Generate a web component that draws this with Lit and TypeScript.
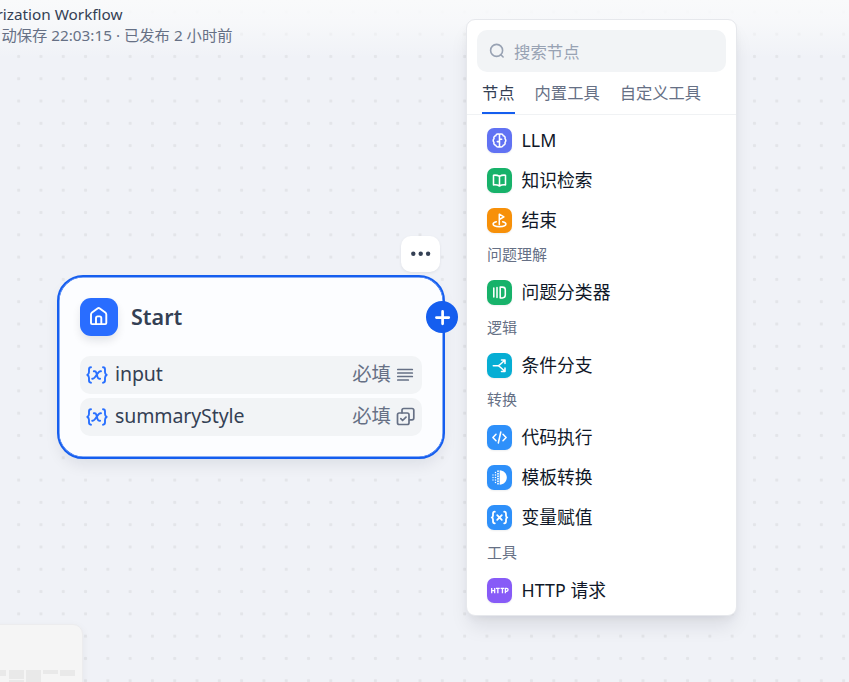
import { LitElement, html, css, svg } from 'lit';
import { customElement, property, state } from 'lit/decorators.js';
import { classMap } from 'lit/directives/class-map.js';

const glyphs: Record<string, unknown> = {
  llm: svg`<path d="M12.500 6v13M11.600 6.100c-1.400-.3-2.600.4-2.900 1.700-1.500.3-2.200 1.600-1.700 2.900-1.100 1-1.100 2.600 0 3.600-.5 1.400.2 2.600 1.700 2.900.3 1.300 1.500 2 2.900 1.700M13.400 6.100c1.400-.3 2.600.4 2.900 1.700 1.500.3 2.200 1.600 1.700 2.900 1.100 1 1.100 2.600 0 3.600.5 1.400-.2 2.600-1.700 2.900-.3 1.300-1.500 2-2.900 1.700M10.300 13.600h2.200M12.500 11.200h2.200"/>`,
  book: svg`<path d="M12.500 8.300v9.700M12.500 8.300c-1.600-1-3.800-1.300-6-1.100v9.700c2.200-.2 4.400.1 6 1.100 1.600-1 3.800-1.300 6-1.100V7.200c-2.200-.2-4.400.1-6 1.100z"/>`,
  end: svg`<path d="M12.300 16.500V6.200l4.600 2.700-4.600 2.600"/><path d="M9.300 13.800c-1.900.4-3.200 1.200-3.200 2.200 0 1.500 2.800 2.600 6.400 2.600s6.400-1.100 6.400-2.600c0-1-1.300-1.800-3.200-2.200"/>`,
  classify: svg`<path d="M6.800 8v9M10 7.600v9.800M13.200 7.100h2.200c1.800 0 2.900 1.100 2.900 2.700v5.300c0 1.700-1.100 2.800-2.900 2.800h-2.200z"/>`,
  branch: svg`<path d="M6.300 12.700h4.500c1 0 1.600-.4 2.300-1.200l4.700-4.300M10.800 12.700c1 0 1.600.5 2.300 1.300l4.700 4.300M14.500 6.900h3.500v3.500M14.500 18.500h3.500V15"/>`,
  code: svg`<path d="M9 9.300l-3.100 3.200 3.100 3.200M16 9.300l3.100 3.200-3.100 3.200M13.800 7l-2.500 11"/>`,
  template: svg`<path class="fill" d="M12.700 5.200c4 .2 7.100 3.400 7.100 7.300s-3.100 7.100-7.100 7.300z"/><g class="fill"><circle cx="11" cy="6.200" r=".9"/><circle cx="11" cy="8.700" r=".95"/><circle cx="11" cy="11.200" r=".95"/><circle cx="11" cy="13.700" r=".95"/><circle cx="11" cy="16.200" r=".95"/><circle cx="11" cy="18.700" r=".9"/><circle cx="8.500" cy="7.600" r=".75"/><circle cx="8.500" cy="10" r=".8"/><circle cx="8.500" cy="12.500" r=".8"/><circle cx="8.500" cy="15" r=".8"/><circle cx="8.500" cy="17.400" r=".75"/><circle cx="6" cy="10" r=".65"/><circle cx="6" cy="12.500" r=".7"/><circle cx="6" cy="15" r=".65"/></g>`,
  assign: svg`<path class="heavy" d="M7.800 6.700c-1.500 0-1.800.7-1.800 2v1.700c0 1.200-.4 1.800-1.300 2.100.9.3 1.300.9 1.300 2.100v1.700c0 1.300.3 2 1.800 2M17.200 6.700c1.500 0 1.800.7 1.800 2v1.700c0 1.200.4 1.800 1.300 2.100-.9.3-1.300.9-1.300 2.100v1.700c0 1.300-.3 2-1.800 2M10.200 10.200l4.600 4.600M14.800 10.200l-4.600 4.600"/>`,
  http: svg`<path class="bold" d="M4.700 10v5.200M7.700 10v5.200M4.700 12.600h3M9 10.400h3.700M10.850 10.400v4.800M13.600 10.400h3.700M15.450 10.400v4.800M18.400 15.200v-4.800h1.200a1.450 1.450 0 0 1 0 2.900h-1.200"/>`,
};

interface Block { icon: string; label: string; tone: string }
interface Section { title?: string; blocks: Block[] }

const sections: Section[] = [
  { blocks: [
    { icon: 'llm', label: 'LLM', tone: 'indigo' },
    { icon: 'book', label: '知识检索', tone: 'green' },
    { icon: 'end', label: '结束', tone: 'orange' },
  ] },
  { title: '问题理解', blocks: [{ icon: 'classify', label: '问题分类器', tone: 'green' }] },
  { title: '逻辑', blocks: [{ icon: 'branch', label: '条件分支', tone: 'cyan' }] },
  { title: '转换', blocks: [
    { icon: 'code', label: '代码执行', tone: 'blue' },
    { icon: 'template', label: '模板转换', tone: 'blue' },
    { icon: 'assign', label: '变量赋值', tone: 'blue' },
  ] },
  { title: '工具', blocks: [{ icon: 'http', label: 'HTTP 请求', tone: 'violet' }] },
];

@customElement('block-icon')
class BlockIcon extends LitElement {
  @property() name = '';
  @property() tone = 'blue';
  static styles = css`
    :host { display: block; width: 25px; height: 25px; flex: none; }
    .tile { width: 25px; height: 25px; border-radius: 7px; box-shadow: 0 1px 2px rgba(16, 24, 40, .07); }
    .indigo { background: #6172f3; }
    .green { background: #17b26a; }
    .orange { background: #f79009; }
    .cyan { background: #06aed4; }
    .blue { background: #2e90fa; }
    .violet { background: #875bf7; }
    svg { display: block; fill: none; stroke: #fff; stroke-width: 1.55; stroke-linecap: round; stroke-linejoin: round; }
    .fill { fill: #fff; stroke: none; }
    .heavy { stroke-width: 1.8; }
    .bold { stroke-width: 1.3; stroke-linecap: butt; }
  `;
  render() {
    return html`<div class="tile ${this.tone}"><svg width="25" height="25" viewBox="0 0 25 25">${glyphs[this.name]}</svg></div>`;
  }
}

@customElement('node-picker')
class NodePicker extends LitElement {
  @state() private active = 0;
  static styles = css`
    :host { display: block; box-sizing: border-box; width: 271px; height: 597px; border: 1px solid #e6e8ec; border-radius: 9px; background: #fff; box-shadow: 0 13px 20px -4px rgba(16, 24, 40, .1), 0 4px 8px -2px rgba(16, 24, 40, .05); }
    .search { display: flex; align-items: center; gap: 9px; box-sizing: border-box; height: 42px; margin: 10px 10px 0; padding: 0 12px; border-radius: 10px; background: #f2f4f6; color: #98a2b3; font-size: 16.400px; }
    .search svg { fill: none; stroke: #98a2b3; stroke-width: 1.6; stroke-linecap: round; }
    .tabs { display: flex; gap: 20px; height: 42px; padding: 0 15px; border-bottom: 1px solid #f0f2f4; }
    .tab { box-sizing: border-box; height: 42px; line-height: 43px; font-size: 16.300px; color: #667085; border-bottom: 2px solid transparent; white-space: nowrap; }
    .tab.on { color: #344054; border-bottom-color: #155eef; }
    .list { padding-top: 5px; }
    .title { height: 32.500px; line-height: 28px; padding-left: 20px; font-size: 15px; color: #667085; }
    .row { display: flex; align-items: center; gap: 9.500px; height: 40px; padding-left: 20px; font-size: 17.800px; line-height: 24px; color: #101828; }
    .label { margin-top: -1px; }
    .latin { letter-spacing: .05px; }
  `;
  render() {
    return html`
      <div class="search"><svg width="16" height="16" viewBox="0 0 16 16"><circle cx="7.600" cy="7.400" r="6"/><path d="M12.100 12l2 2"/></svg><span>搜索节点</span></div>
      <div class="tabs">${['节点', '内置工具', '自定义工具'].map((t, i) => html`<div class=${classMap({ tab: true, on: i === this.active })} @click=${() => (this.active = i)}>${t}</div>`)}</div>
      <div class="list">${sections.map((s) => html`
        ${s.title ? html`<div class="title">${s.title}</div>` : ''}
        ${s.blocks.map((b) => html`<div class="row"><block-icon name=${b.icon} tone=${b.tone}></block-icon><span class=${classMap({ label: true, latin: /^[A-Z]/.test(b.label) })}>${b.label}</span></div>`)}`)}
      </div>`;
  }
}

@customElement('start-node')
class StartNode extends LitElement {
  static styles = css`
    :host { display: block; box-sizing: border-box; width: 388px; height: 184px; border: 2px solid #155eef; border-radius: 26px; background: #fcfdff; padding: 21px 21px; box-shadow: 0 8px 16px -3px rgba(16, 24, 40, .09), inset 0 0 0 .5px #155eef; }
    .head { display: flex; align-items: center; gap: 13px; height: 38px; margin-bottom: 20px; }
    .home { width: 38px; height: 38px; border-radius: 11px; background: #296dff; box-shadow: 0 5px 10px -1px rgba(16, 24, 40, .12); }
    .home svg { display: block; fill: none; stroke: #fff; stroke-width: 1.9; stroke-linejoin: round; stroke-linecap: round; }
    .name { margin-top: -2px; font-size: 21.500px; font-weight: 600; color: #344054; }
    .field { display: flex; align-items: center; box-sizing: border-box; height: 38px; margin-bottom: 4px; padding: 0 6px; border-radius: 10px; background: #f2f4f6; font-size: 19.500px; line-height: 26px; color: #344054; }
    .var { flex: none; fill: none; stroke: #2970ff; stroke-width: 1.9; stroke-linecap: round; stroke-linejoin: round; margin: -1px 7px 0 0; }
    .key { flex: 1; margin-top: -3px; letter-spacing: -.1px; }
    .must { color: #667085; font-size: 19.400px; margin: -3px 5px 0 0; }
    .type { fill: none; stroke: #667085; stroke-width: 1.7; stroke-linecap: round; stroke-linejoin: round; }
  `;
  private field(key: string, type: unknown) {
    return html`<div class="field">
      <svg class="var" width="22" height="20" viewBox="0 0 22 20"><path d="M5 2.300C3.400 2.300 3 3 3 4.400v2.700C3 8.700 2.500 9.500 1.300 10 2.500 10.500 3 11.300 3 12.900v2.700c0 1.400.4 2.100 2 2.100M17 2.300c1.600 0 2 .7 2 2.100v2.700c0 1.600.5 2.400 1.700 2.900-1.200.5-1.700 1.300-1.700 2.900v2.700c0 1.400-.4 2.100-2 2.100M7.800 6.300h1c.9 0 1.200.4 1.500 1.400l1.300 4.600c.3 1 .6 1.400 1.500 1.400h1M15 6.300h-.6c-.9 0-1.400.4-2.100 1.300l-3.400 4.700c-.7 1-1.200 1.400-2.100 1.400h-.6"/></svg>
      <span class="key">${key}</span><span class="must">必填</span>
      <svg class="type" width="20" height="20" viewBox="0 0 20 20">${type}</svg>
    </div>`;
  }
  render() {
    return html`
      <div class="head"><div class="home"><svg width="38" height="38" viewBox="0 0 38 38"><path d="M11 16.500c0-.8.300-1.400 1-1.900l5.500-4.100c.8-.6 1.500-.6 2.300 0l5.500 4.100c.7.500 1 1.100 1 1.900v8.500c0 .7-.4 1.100-1.100 1.100H12.100c-.7 0-1.100-.4-1.100-1.100z"/><path d="M16 26v-5.800c0-1.200.6-1.800 1.700-1.800h1.900c1.100 0 1.700.6 1.700 1.800V26"/></svg></div><span class="name">Start</span></div>
      ${this.field('input', svg`<path d="M1.800 4.500h14.500M1.800 8h14.500M1.800 11.500h14.500M1.800 15h10.500"/>`)}
      ${this.field('summaryStyle', svg`<rect x="1.500" y="6" width="11.500" height="11.500" rx="1.800"/><path d="M6 5.800V3.300c0-1.200.6-1.800 1.800-1.800H16c1.200 0 1.800.6 1.800 1.800V11c0 1.200-.6 1.800-1.800 1.800h-2.500M4.800 11.700l1.800 1.800L10 10.100"/>`)}`;
  }
}

@customElement('app-root')
class AppRoot extends LitElement {
  static styles = css`
    :host { display: block; position: relative; width: 849px; height: 682px; overflow: hidden; font-family: "Noto Sans", "Noto Sans CJK SC", sans-serif; background-color: #f0f2f7; background-image: radial-gradient(circle, #e3e5e9 1.300px, transparent 2px); background-size: 22.300px 22.300px; background-position: 7.500px 0.700px; }
    .top { height: 58px; padding-top: 4px; box-sizing: border-box; background: linear-gradient(180deg, #f9fafb 0%, rgba(249, 250, 251, .75) 40%, rgba(249, 250, 251, 0) 100%); white-space: nowrap; }
    .flow { width: 122.500px; height: 21px; line-height: 21px; font-size: 15.300px; color: #344054; }
    .saved { width: 232.500px; height: 21px; line-height: 21px; font-size: 15.300px; color: #667085; }
    .line { display: flex; justify-content: flex-end; }
    .node { position: absolute; left: 57px; top: 275px; }
    .more { position: absolute; left: 401px; top: 236px; width: 39px; height: 36px; border-radius: 10px; background: #fff; box-shadow: 0 1px 3px rgba(16, 24, 40, .08); }
    .more svg, .plus svg { display: block; }
    .plus { position: absolute; left: 426px; top: 301px; width: 32px; height: 32px; border-radius: 50%; background: #155eef; }
    .picker { position: absolute; left: 466px; top: 19px; }
    .map { position: absolute; left: -10px; top: 624px; width: 91px; height: 70px; border: 1px solid #ececee; border-radius: 10px; background: #f5f5f5; box-shadow: 0 3px 10px rgba(16, 24, 40, .06); }
    .map svg { display: block; fill: #e9e9e9; }
  `;
  render() {
    return html`
      <div class="top"><div class="line flow"><span>rization Workflow</span></div><div class="line saved"><span>自动保存 22:03:15 · 已发布 2 小时前</span></div></div>
      <start-node class="node"></start-node>
      <div class="more"><svg width="39" height="36" viewBox="0 0 39 36" fill="#344054"><circle cx="12.300" cy="17.700" r="2.200"/><circle cx="19.700" cy="17.700" r="2.200"/><circle cx="27.100" cy="17.700" r="2.200"/></svg></div>
      <div class="plus"><svg width="32" height="32" viewBox="0 0 32 32" fill="none" stroke="#fff" stroke-width="2.700" stroke-linecap="round"><path d="M16.600 10.400v12.400M10.400 16.600h12.400"/></svg></div>
      <node-picker class="picker"></node-picker>
      <div class="map"><svg width="91" height="58" viewBox="-9 625 91 58"><path d="M-9 670H6v6H-9zM9 670h15v9H9zM9 680h15v3H9zM26 670h15v13H26zM43 670h15v4H43zM60 670h15v6H60z"/></svg></div>`;
  }
}
